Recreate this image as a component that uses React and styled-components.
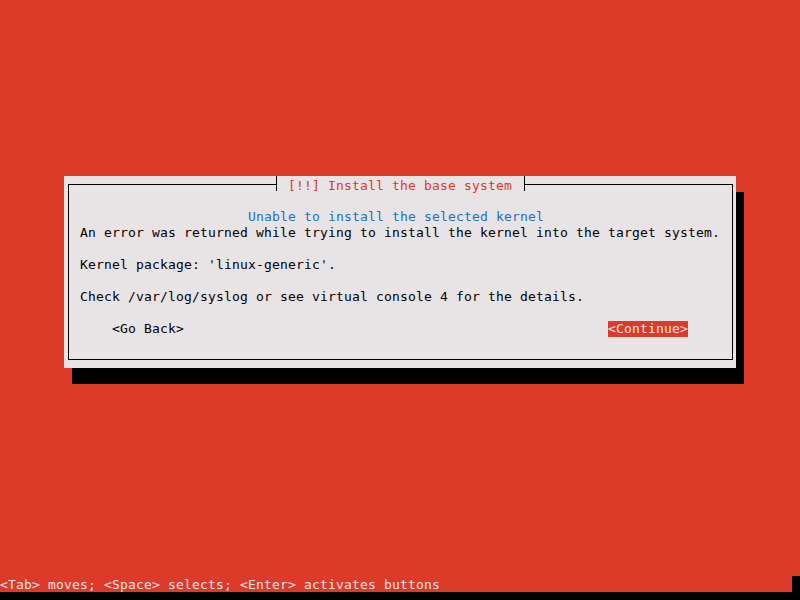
import React from "react";
import styled, { createGlobalStyle } from "styled-components";

const RED = "#dd3a29";
const GRAY = "#e8e4e6";
const BLUE = "#1873c5";

const Global = createGlobalStyle`
  html, body { margin: 0; padding: 0; background: ${RED}; }
  body {
    font-family: "DejaVu Sans Mono", "Liberation Mono", monospace;
    font-size: 13px;
    letter-spacing: 0.173px;
    line-height: 16px;
  }
`;

const Screen = styled.div`
  width: 800px;
  height: 600px;
  display: flex;
  flex-direction: column;
  background: ${RED};
  overflow: hidden;
`;

const Dialog = styled.div`
  margin: 176px 0 0 64px;
  width: 672px;
  height: 192px;
  box-sizing: border-box;
  padding: 8px 3px 8px 4px;
  background: ${GRAY};
  box-shadow: 8px 16px 0 #000;
`;

const Frame = styled.div`
  position: relative;
  box-sizing: border-box;
  height: 176px;
  border: 1px solid #000;
  padding: 24px 11px 0 11px;
  color: #000;
`;

const TitleBar = styled.div`
  position: absolute;
  top: -9px;
  left: 203px;
  height: 16px;
  display: flex;
  background: ${GRAY};
`;

const Tick = styled.span`
  position: relative;
  width: 8px;
  height: 16px;
  &::before {
    content: "";
    position: absolute;
    left: 4px;
    top: 0;
    width: 1px;
    height: 15px;
    background: #000;
  }
  &::after {
    content: "";
    position: absolute;
    top: 8px;
    height: 1px;
    width: 4px;
    background: #000;
    ${(p) => (p.$side === "left" ? "left: 0;" : "left: 4px;")}
  }
`;

const TitleText = styled.span`
  display: block;
  box-sizing: border-box;
  height: 16px;
  color: ${RED};
  padding: 2px 8px 0;
  white-space: pre;
`;

const Heading = styled.div`
  color: ${BLUE};
  text-align: center;
  padding-right: 9px;
  white-space: pre;
`;

const Line = styled.div`
  white-space: pre;
  margin-bottom: ${(p) => (p.$gap ? "16px" : "0")};
`;

const Buttons = styled.div`
  display: flex;
  justify-content: space-between;
  padding: 0 33px 0 32px;
`;

const Button = styled.span`
  white-space: pre;
  background: ${(p) => (p.$active ? RED : "transparent")};
  color: ${(p) => (p.$active ? GRAY : "#000")};
`;

const Spacer = styled.div`
  flex: 1;
`;

const StatusRow = styled.div`
  display: flex;
  height: 16px;
`;

const StatusText = styled.div`
  box-sizing: border-box;
  width: 792px;
  height: 16px;
  padding-top: 1px;
  overflow: hidden;
  background: ${RED};
  color: ${GRAY};
  white-space: pre;
`;

const BlackCell = styled.div`
  width: 8px;
  background: #000;
`;

const BottomStrip = styled.div`
  height: 8px;
  background: #000;
`;

export default function App() {
  return (
    <>
      <Global />
      <Screen>
        <Dialog>
          <Frame>
            <TitleBar>
              <Tick $side="left" />
              <TitleText>[!!] Install the base system</TitleText>
              <Tick $side="right" />
            </TitleBar>
            <Heading>Unable to install the selected kernel</Heading>
            <Line $gap>An error was returned while trying to install the kernel into the target system.</Line>
            <Line $gap>Kernel package: 'linux-generic'.</Line>
            <Line $gap>Check /var/log/syslog or see virtual console 4 for the details.</Line>
            <Buttons>
              <Button>&lt;Go Back&gt;</Button>
              <Button $active>&lt;Continue&gt;</Button>
            </Buttons>
          </Frame>
        </Dialog>
        <Spacer />
        <StatusRow>
          <StatusText>&lt;Tab&gt; moves; &lt;Space&gt; selects; &lt;Enter&gt; activates buttons</StatusText>
          <BlackCell />
        </StatusRow>
        <BottomStrip />
      </Screen>
    </>
  );
}
